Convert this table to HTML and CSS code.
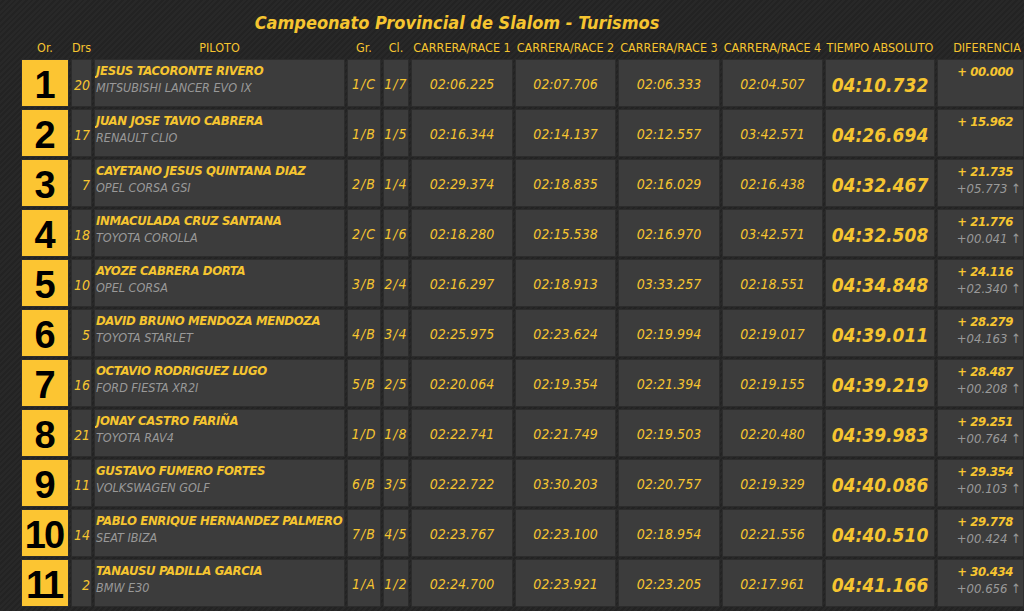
FILE: index.html
```html
<!DOCTYPE html>
<html lang="es">
<head>
<meta charset="utf-8">
<title>Campeonato Provincial de Slalom - Turismos</title>
<link rel="stylesheet" href="styles.css">
</head>
<body>
<div class="page">
  <h1 class="title">Campeonato Provincial de Slalom - Turismos</h1>
  <div class="grid">
    <div class="h">Or.</div><div class="h">Drs</div><div class="h">PILOTO</div><div class="h">Gr.</div><div class="h">Cl.</div><div class="h">CARRERA/RACE 1</div><div class="h">CARRERA/RACE 2</div><div class="h">CARRERA/RACE 3</div><div class="h">CARRERA/RACE 4</div><div class="h">TIEMPO ABSOLUTO</div><div class="h">DIFERENCIA</div>

    <div class="pos">1</div><div class="c drs">20</div><div class="c pil"><div class="name">JESUS TACORONTE RIVERO</div><div class="car">MITSUBISHI LANCER EVO IX</div></div><div class="c sm">1/C</div><div class="c sm">1/7</div><div class="c t">02:06.225</div><div class="c t">02:07.706</div><div class="c t">02:06.333</div><div class="c t">02:04.507</div><div class="c abs">04:10.732</div><div class="c dif"><div class="d1">+ 00.000</div></div>

    <div class="pos">2</div><div class="c drs">17</div><div class="c pil"><div class="name">JUAN JOSE TAVIO CABRERA</div><div class="car">RENAULT CLIO</div></div><div class="c sm">1/B</div><div class="c sm">1/5</div><div class="c t">02:16.344</div><div class="c t">02:14.137</div><div class="c t">02:12.557</div><div class="c t">03:42.571</div><div class="c abs">04:26.694</div><div class="c dif"><div class="d1">+ 15.962</div></div>

    <div class="pos">3</div><div class="c drs">7</div><div class="c pil"><div class="name">CAYETANO JESUS QUINTANA DIAZ</div><div class="car">OPEL CORSA GSI</div></div><div class="c sm">2/B</div><div class="c sm">1/4</div><div class="c t">02:29.374</div><div class="c t">02:18.835</div><div class="c t">02:16.029</div><div class="c t">02:16.438</div><div class="c abs">04:32.467</div><div class="c dif"><div class="d1">+ 21.735</div><div class="d2">+05.773 <span class="ar">↑</span></div></div>

    <div class="pos">4</div><div class="c drs">18</div><div class="c pil"><div class="name">INMACULADA CRUZ SANTANA</div><div class="car">TOYOTA COROLLA</div></div><div class="c sm">2/C</div><div class="c sm">1/6</div><div class="c t">02:18.280</div><div class="c t">02:15.538</div><div class="c t">02:16.970</div><div class="c t">03:42.571</div><div class="c abs">04:32.508</div><div class="c dif"><div class="d1">+ 21.776</div><div class="d2">+00.041 <span class="ar">↑</span></div></div>

    <div class="pos">5</div><div class="c drs">10</div><div class="c pil"><div class="name">AYOZE CABRERA DORTA</div><div class="car">OPEL CORSA</div></div><div class="c sm">3/B</div><div class="c sm">2/4</div><div class="c t">02:16.297</div><div class="c t">02:18.913</div><div class="c t">03:33.257</div><div class="c t">02:18.551</div><div class="c abs">04:34.848</div><div class="c dif"><div class="d1">+ 24.116</div><div class="d2">+02.340 <span class="ar">↑</span></div></div>

    <div class="pos">6</div><div class="c drs">5</div><div class="c pil"><div class="name">DAVID BRUNO MENDOZA MENDOZA</div><div class="car">TOYOTA STARLET</div></div><div class="c sm">4/B</div><div class="c sm">3/4</div><div class="c t">02:25.975</div><div class="c t">02:23.624</div><div class="c t">02:19.994</div><div class="c t">02:19.017</div><div class="c abs">04:39.011</div><div class="c dif"><div class="d1">+ 28.279</div><div class="d2">+04.163 <span class="ar">↑</span></div></div>

    <div class="pos">7</div><div class="c drs">16</div><div class="c pil"><div class="name">OCTAVIO RODRIGUEZ LUGO</div><div class="car">FORD FIESTA XR2I</div></div><div class="c sm">5/B</div><div class="c sm">2/5</div><div class="c t">02:20.064</div><div class="c t">02:19.354</div><div class="c t">02:21.394</div><div class="c t">02:19.155</div><div class="c abs">04:39.219</div><div class="c dif"><div class="d1">+ 28.487</div><div class="d2">+00.208 <span class="ar">↑</span></div></div>

    <div class="pos">8</div><div class="c drs">21</div><div class="c pil"><div class="name">JONAY CASTRO FARIÑA</div><div class="car">TOYOTA RAV4</div></div><div class="c sm">1/D</div><div class="c sm">1/8</div><div class="c t">02:22.741</div><div class="c t">02:21.749</div><div class="c t">02:19.503</div><div class="c t">02:20.480</div><div class="c abs">04:39.983</div><div class="c dif"><div class="d1">+ 29.251</div><div class="d2">+00.764 <span class="ar">↑</span></div></div>

    <div class="pos">9</div><div class="c drs">11</div><div class="c pil"><div class="name">GUSTAVO FUMERO FORTES</div><div class="car">VOLKSWAGEN GOLF</div></div><div class="c sm">6/B</div><div class="c sm">3/5</div><div class="c t">02:22.722</div><div class="c t">03:30.203</div><div class="c t">02:20.757</div><div class="c t">02:19.329</div><div class="c abs">04:40.086</div><div class="c dif"><div class="d1">+ 29.354</div><div class="d2">+00.103 <span class="ar">↑</span></div></div>

    <div class="pos">10</div><div class="c drs">14</div><div class="c pil"><div class="name">PABLO ENRIQUE HERNANDEZ PALMERO</div><div class="car">SEAT IBIZA</div></div><div class="c sm">7/B</div><div class="c sm">4/5</div><div class="c t">02:23.767</div><div class="c t">02:23.100</div><div class="c t">02:18.954</div><div class="c t">02:21.556</div><div class="c abs">04:40.510</div><div class="c dif"><div class="d1">+ 29.778</div><div class="d2">+00.424 <span class="ar">↑</span></div></div>

    <div class="pos">11</div><div class="c drs">2</div><div class="c pil"><div class="name">TANAUSU PADILLA GARCIA</div><div class="car">BMW E30</div></div><div class="c sm">1/A</div><div class="c sm">1/2</div><div class="c t">02:24.700</div><div class="c t">02:23.921</div><div class="c t">02:23.205</div><div class="c t">02:17.961</div><div class="c abs">04:41.166</div><div class="c dif"><div class="d1">+ 30.434</div><div class="d2">+00.656 <span class="ar">↑</span></div></div>
  </div>
</div>
</body>
</html>
```
FILE: styles.css
```css
html, body {
  margin: 0;
  padding: 0;
  height: 100%;
  overflow: hidden;
}
body {
  background-color: #262626;
  background-image: repeating-linear-gradient(135deg, #282828 0 2px, #232323 2px 4px);
  font-family: "DejaVu Sans Condensed", "DejaVu Sans", sans-serif;
  color: #f6c530;
}
.page {
  padding: 0 0 0 21px;
}
.title {
  margin: 0;
  height: 38px;
  width: 872px;
  text-align: center;
  font-size: 18px;
  font-weight: bold;
  font-style: italic;
  line-height: 46px;
  color: #f6c530;
}
.grid {
  display: grid;
  grid-template-columns: 48px 21px 251px 34px 26px 102px 101px 102px 101px 110px 100px;
  grid-template-rows: 19px;
  grid-auto-rows: 48px;
  gap: 2px;
  width: 1020px;
}
.h {
  font-size: 12.5px;
  text-align: center;
  white-space: nowrap;
  line-height: 19px;
  color: #f6c530;
}
.c {
  background: #3c3c3c;
  border: 1px solid #2c2c2c;
  box-sizing: border-box;
}
.pos {
  background: #fcc532;
  border: 1px solid #2c2c2c;
  box-sizing: border-box;
  color: #000;
  font-family: "Liberation Sans", Arial, sans-serif;
  font-weight: bold;
  font-size: 38px;
  letter-spacing: -2px;
  display: flex;
  align-items: center;
  justify-content: center;
  padding-top: 4px;
  padding-right: 2px;
}
.drs {
  display: flex;
  align-items: center;
  justify-content: flex-end;
  padding: 4px 1px 0 0;
  font-style: italic;
  font-size: 14px;
}
.pil {
  padding: 2px 0 0 1px;
  font-style: italic;
  white-space: nowrap;
  overflow: hidden;
}
.name {
  font-size: 13px;
  font-weight: bold;
  line-height: 17px;
  letter-spacing: -0.35px;
}
.car {
  font-size: 12.5px;
  line-height: 17px;
  color: #999999;
}
.sm, .t, .abs {
  display: flex;
  align-items: center;
  justify-content: center;
  font-style: italic;
  padding-top: 2px;
}
.sm {
  font-size: 14px;
  letter-spacing: 1px;
}
.t {
  font-size: 14px;
}
.abs {
  font-size: 19px;
  font-weight: bold;
  padding-top: 4px;
}
.dif {
  font-style: italic;
  text-align: right;
  width: 87px;
  padding-top: 3px;
}
.d1 {
  font-size: 13px;
  font-weight: bold;
  letter-spacing: -0.4px;
  line-height: 17px;
  padding-right: 10px;
}
.d2 {
  font-size: 13px;
  line-height: 17px;
  color: #999999;
  padding-right: 2px;
}
.ar {
  font-style: normal;
}
```
